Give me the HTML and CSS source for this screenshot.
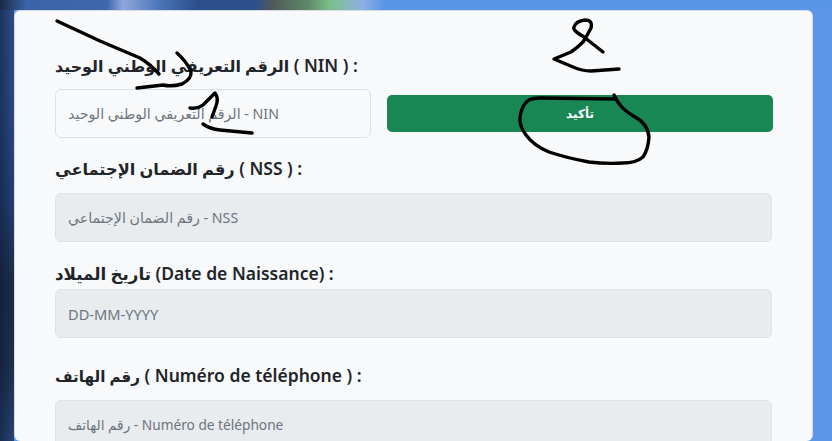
FILE: index.html
```html
<!DOCTYPE html>
<html lang="en">
<head>
    <meta charset="UTF-8">
    <meta name="viewport" content="width=device-width, initial-scale=1.0">
    <title>Inscription</title>
    <link rel="stylesheet" href="styles.css">
</head>
<body>
    <div class="card">
        <form class="form">
            <label for="nin"><span class="ar">الرقم التعريفي الوطني الوحيد</span> ( NIN ) :</label>
            <div class="nin-row">
                <input type="text" id="nin" placeholder="الرقم التعريفي الوطني الوحيد - NIN">
                <button type="button">تأكيد</button>
            </div>

            <label for="nss" class="label-nss"><span class="ar">رقم الضمان الإجتماعي</span> ( NSS ) :</label>
            <input type="text" id="nss" class="locked" placeholder="رقم الضمان الإجتماعي - NSS" disabled>

            <label for="dob" class="label-dob"><span class="ar">تاريخ الميلاد</span> (Date de Naissance) :</label>
            <input type="text" id="dob" class="locked" placeholder="DD-MM-YYYY" disabled>

            <label for="tel" class="label-tel"><span class="ar">رقم الهاتف</span> ( Numéro de téléphone ) :</label>
            <input type="text" id="tel" class="locked" placeholder="رقم الهاتف - Numéro de téléphone" disabled>
        </form>
    </div>

    <svg class="scribble" viewBox="0 0 832 441" fill="none" stroke="#000" stroke-width="3.4" stroke-linecap="round" stroke-linejoin="round">
        <path d="M57 21 L100 41 L140 58 Q150 64 159 74"/>
        <path d="M177 53 Q186 61 191 71 Q192 79 182 84 Q172 87 163 85 L137 88"/>
        <path d="M190 108 Q198 109 203 105 L215 93 Q219 98 216 106 L212 117"/>
        <path d="M203 124 Q210 129 220 130 L252 133"/>
        <path d="M603 52 L584 37 Q572 30 574 27 Q576 21 585 20 Q593 20 591 28 Q587 36 583 42 Q577 48 571 52 L554 59 L573 67 Q582 71 591 71 L619 69"/>
        <path d="M614 95 Q617 102 621 106 Q625 111 635 117 Q648 124 649 137 Q648 150 643 157 Q636 163 623 163 Q605 164 589 162 Q567 158 549 152 Q534 146 526 135 Q519 126 520 117 Q522 104 529 100 Q533 98 540 98 L616 99"/>
    </svg>
</body>
</html>
```

FILE: styles.css
```css
* { margin: 0; padding: 0; box-sizing: border-box; }
html, body { height: 100%; overflow: hidden; }
body {
    font-family: "Noto Sans", "DejaVu Sans", sans-serif;
    color: #212529;
    padding: 10px 19px 0 14px;
    background:
        linear-gradient(90deg, #1a2a44 0, #3a64a8 27px, #3f68ac 107px, #8ea8dc 123px, #4a74b8 160px, #2c4f8c 197px, #2c4f8c 256px, #4f5a58 272px, #5f8a6a 309px, #7cc088 330px, #8fb0e4 362px, #5a96e6 384px, #5896e8 100%) top / 100% 10px no-repeat,
        linear-gradient(90deg, rgba(10, 20, 40, .45), rgba(10, 20, 40, 0)) left / 14px 100% no-repeat,
        linear-gradient(180deg, #2d4e86 0, #2a4a85 100px, #233f76 200px, #1c2e4a 280px, #1c304e 360px, #274374 441px) left / 14px 100% no-repeat,
        #5b96e8;
}
.card {
    background: #f8f9fa;
    border: 1px solid #d5dbe3;
    border-bottom: none;
    border-radius: 6px;
    height: 100%;
    padding: 41px 40px 0;
}
.form { display: flex; flex-direction: column; }
label {
    font-size: 17.5px;
    font-weight: 600;
    line-height: 27px;
    height: 37px;
}
.ar { font-size: 15.9px; }
.label-nss { margin-top: 17px; height: 38px; }
.label-nss .ar { font-size: 16.2px; }
.label-dob { margin-top: 18px; height: 29px; }
.label-dob .ar { font-size: 16.7px; }
.label-tel { margin-top: 24px; height: 38px; }
.label-tel .ar { font-size: 15.2px; }
input {
    width: 100%;
    height: 49px;
    flex: none;
    padding: 0 12px;
    font-family: inherit;
    font-size: 14.2px;
    color: #212529;
    background: #f8f9fa;
    border: 1px solid #dee2e6;
    border-radius: 6px;
}
input::placeholder { color: #6c757d; opacity: 1; }
input.locked { background: #e9ecef; }
#dob { font-size: 14.6px; }
#tel { font-size: 13.7px; }
.nin-row {
    display: grid;
    grid-template-columns: 316px 386px;
    column-gap: 16px;
    align-items: center;
}
button {
    height: 37px;
    background: #198754;
    color: #fff;
    border: none;
    border-radius: 5px;
    font-family: inherit;
    font-size: 12px;
    font-weight: 700;
}
.scribble {
    position: absolute;
    top: 0;
    left: 0;
    width: 832px;
    height: 441px;
    pointer-events: none;
}
```
